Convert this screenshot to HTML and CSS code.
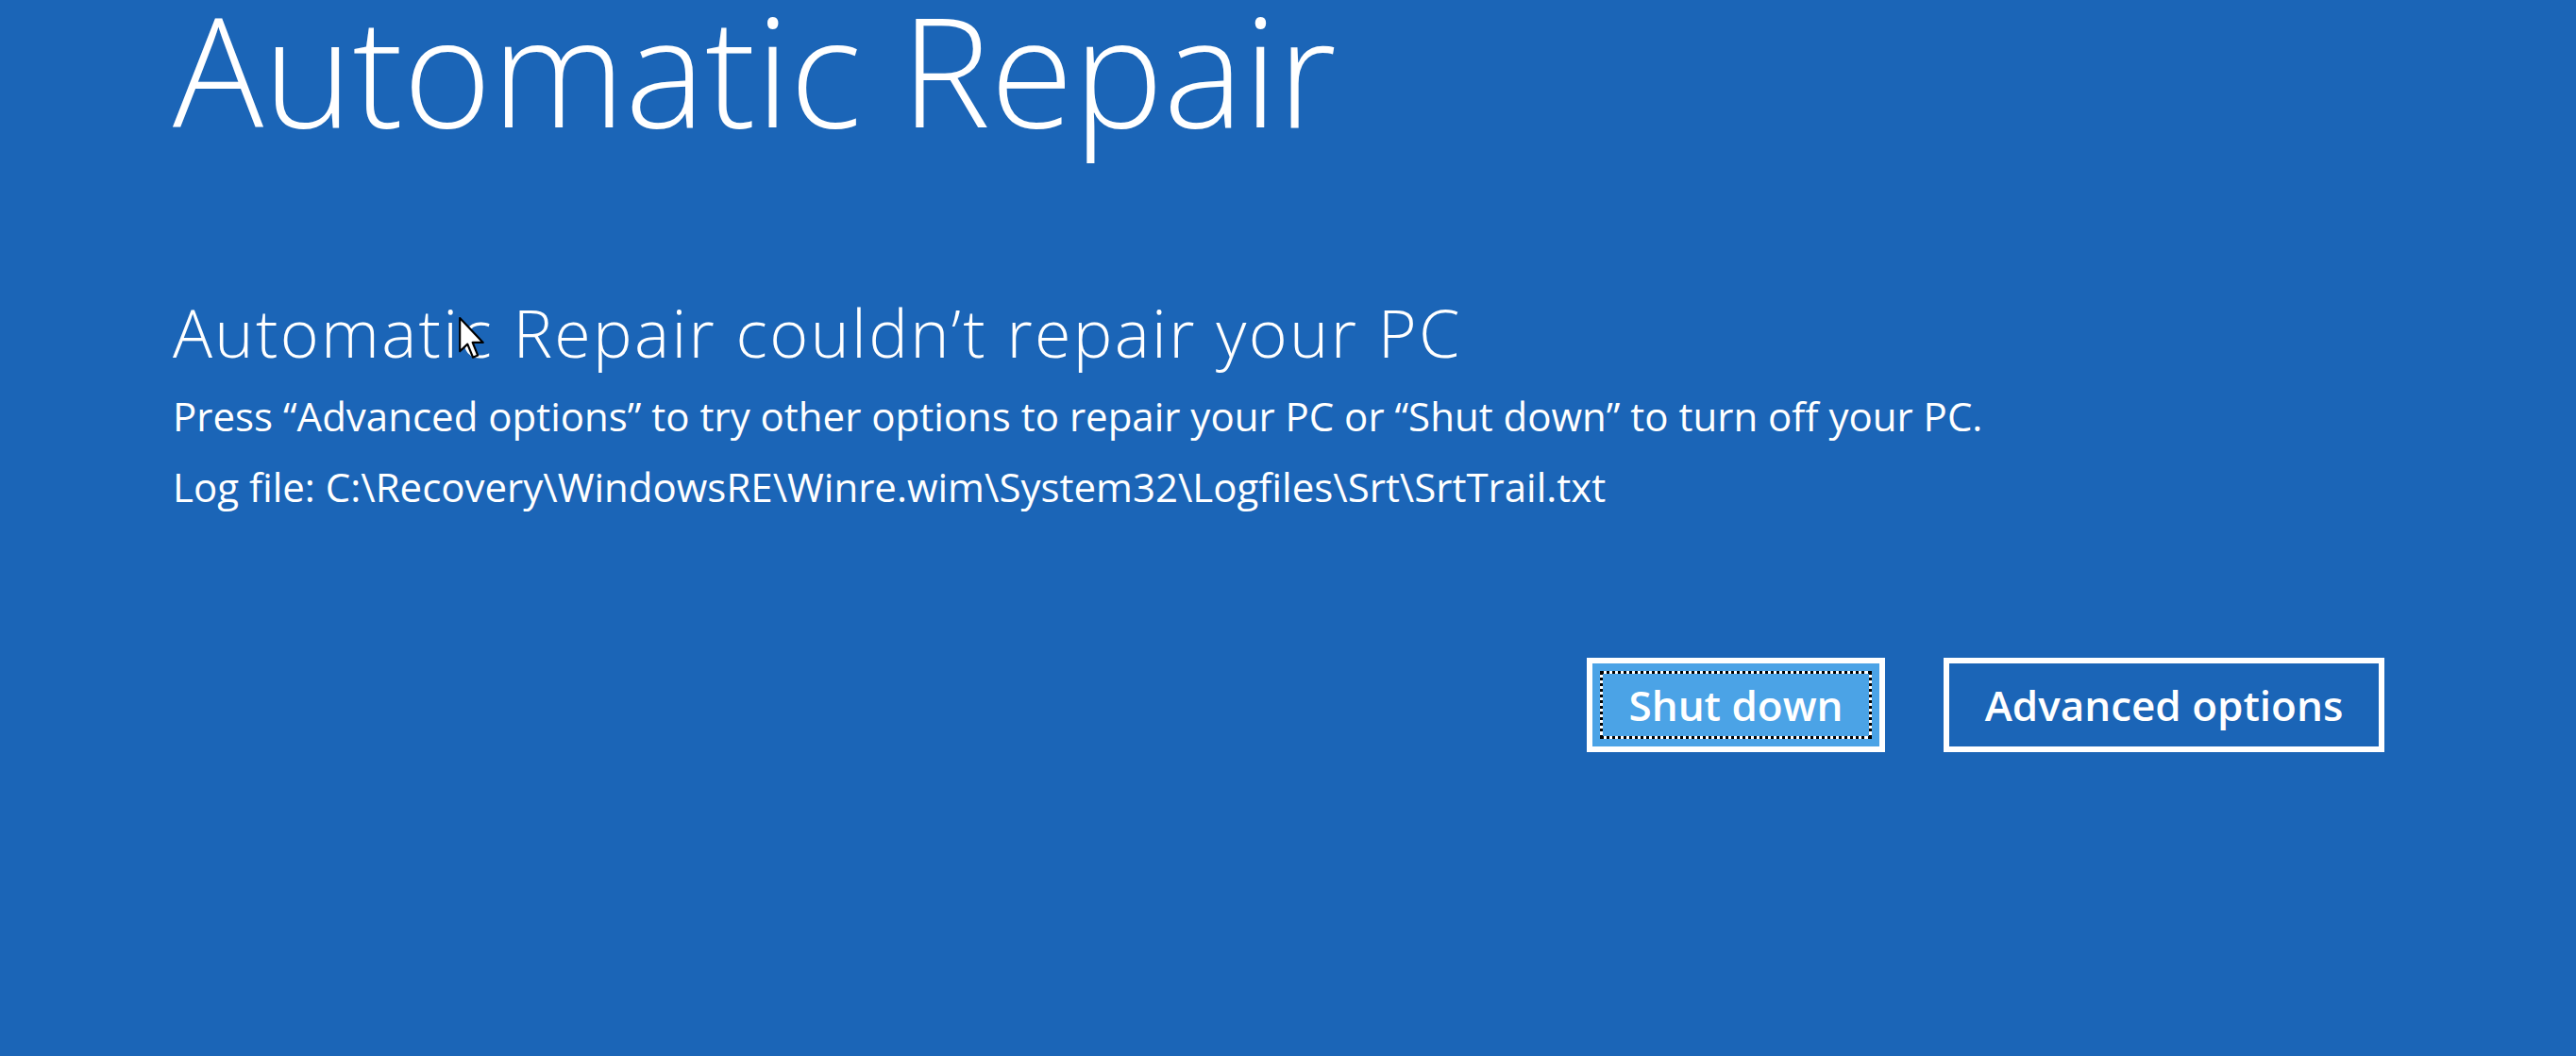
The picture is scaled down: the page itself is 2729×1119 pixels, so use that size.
FILE: index.html
```html
<!DOCTYPE html>
<html lang="en">
<head>
<meta charset="utf-8">
<title>Automatic Repair</title>
<link rel="stylesheet" href="styles.css">
</head>
<body>
<main class="screen">
  <h1 class="title">Automatic Repair</h1>
  <h2 class="subtitle">Automatic Repair couldn’t repair your PC</h2>
  <p class="body-line">Press “Advanced options” to try other options to repair your PC or “Shut down” to turn off your PC.</p>
  <p class="body-line log">Log file: C:\Recovery\WindowsRE\Winre.wim\System32\Logfiles\Srt\SrtTrail.txt</p>
  <div class="actions">
    <button class="btn btn-primary"><span class="focus">Shut down</span></button>
    <button class="btn btn-secondary"><span class="label">Advanced options</span></button>
  </div>
  <svg class="cursor" width="28" height="47" viewBox="0 0 13 22" aria-hidden="true">
    <path d="M0.5 0.5 L0.5 17 L4.3 13.4 L7 20 L9.4 19 L6.8 12.6 L12 12.6 Z" fill="#ffffff" stroke="#000000" stroke-width="1" stroke-linejoin="round"/>
  </svg>
</main>
</body>
</html>
```
FILE: styles.css
```css
html, body {
  margin: 0;
  padding: 0;
  height: 100%;
}
body {
  background: #1b65b7;
  color: #ffffff;
  font-family: "Open Sans", "Noto Sans", "Liberation Sans", sans-serif;
  overflow: hidden;
}
.screen {
  position: relative;
  height: 100%;
  padding: 0 203px 0 183px;
  box-sizing: border-box;
  display: flex;
  flex-direction: column;
}
.title {
  margin: 0;
  font-weight: 300;
  font-size: 160px;
  line-height: 146px;
  letter-spacing: 0;
}
.subtitle {
  margin: 166px 0 0;
  font-weight: 300;
  font-size: 70px;
  line-height: 80px;
  letter-spacing: 2.3px;
}
.body-line {
  margin: 17px 0 0;
  font-size: 42px;
  line-height: 64px;
  letter-spacing: 0;
}
.body-line.log {
  margin-top: 11px;
}
.actions {
  display: flex;
  justify-content: flex-end;
  gap: 62px;
  margin-top: 149px;
}
.btn {
  height: 100px;
  border: 6px solid #ffffff;
  box-sizing: border-box;
  color: #ffffff;
  font-family: inherit;
  font-weight: 600;
  font-size: 44px;
  padding: 0;
  display: flex;
  align-items: stretch;
}
.btn-primary {
  width: 316px;
  background: #4ba3e6;
  padding: 8px;
}
.btn-secondary {
  width: 467px;
  background: #1b65b7;
}
.focus {
  flex: 1;
  border: 3px dotted #000000;
  background: #ffffff;
  box-shadow: inset 0 0 0 200px #4ba3e6;
  display: flex;
  align-items: center;
  justify-content: center;
}
.label {
  flex: 1;
  display: flex;
  align-items: center;
  justify-content: center;
}
.cursor {
  position: absolute;
  left: 486px;
  top: 336px;
}
```
